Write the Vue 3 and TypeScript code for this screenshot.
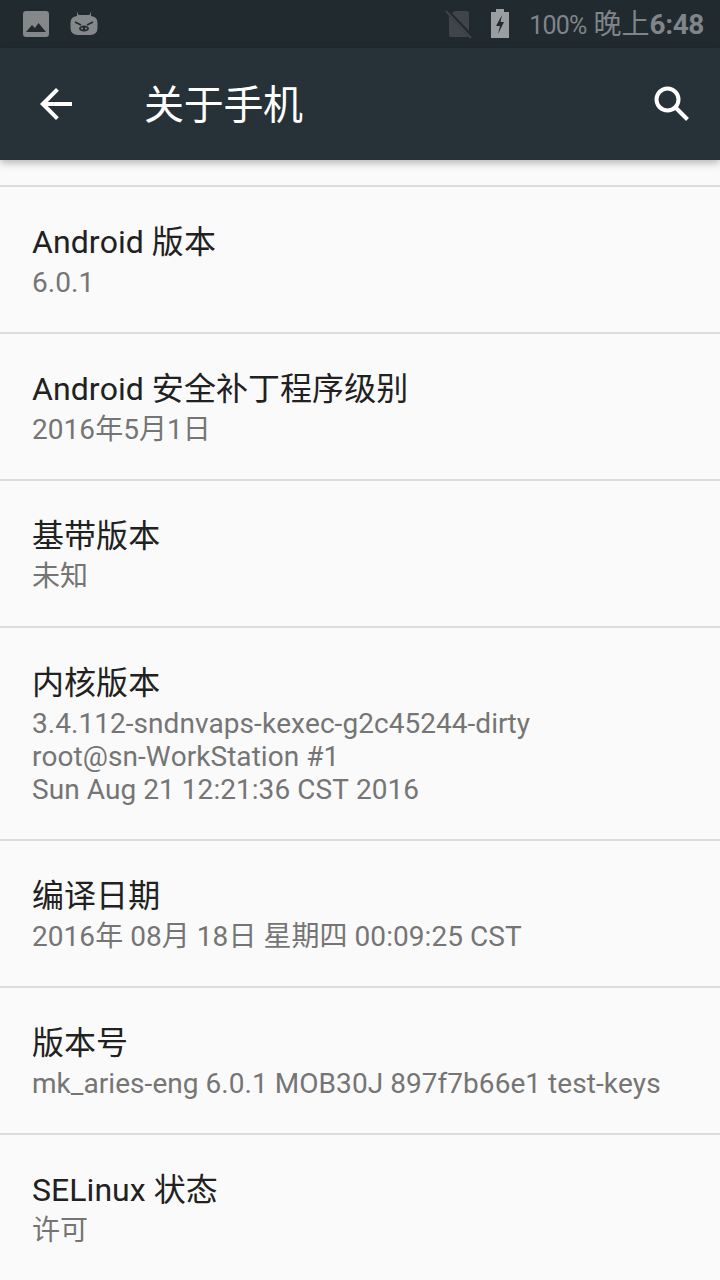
<script setup lang="ts">
interface Row {
  title: string
  lines: string[]
}

const rows: Row[] = [
  { title: 'Android 版本', lines: ['6.0.1'] },
  { title: 'Android 安全补丁程序级别', lines: ['2016年5月1日'] },
  { title: '基带版本', lines: ['未知'] },
  {
    title: '内核版本',
    lines: ['3.4.112-sndnvaps-kexec-g2c45244-dirty', 'root@sn-WorkStation #1', 'Sun Aug 21 12:21:36 CST 2016']
  },
  { title: '编译日期', lines: ['2016年 08月 18日 星期四 00:09:25 CST'] },
  { title: '版本号', lines: ['mk_aries-eng 6.0.1 MOB30J 897f7b66e1 test-keys'] },
  { title: 'SELinux 状态', lines: ['许可'] }
]
</script>

<template>
  <div class="screen">
    <div class="status">
      <svg class="pic" viewBox="0 0 26 26" width="26" height="26">
        <rect width="26" height="26" rx="3" fill="#84888b" />
        <path d="M3 21 L9 14 L12 17 L15.5 12 L23 21 Z" fill="#212a2f" />
      </svg>
      <svg class="pig" viewBox="0 0 28 26" width="28" height="26">
        <path d="M7 5 L7 0.5 L8.5 4 H19.5 L21 0.5 L21 5 Q27.5 5.5 27.5 12 V17 Q27.5 24 20 24 H8 Q0.5 24 0.5 17 V12 Q0.5 5.5 7 5 Z" fill="#84888b" />
        <path d="M5 11 L11 14 M23 11 L17 14" stroke="#212a2f" stroke-width="1.6" fill="none" />
        <ellipse cx="14" cy="17.5" rx="5" ry="3" fill="#212a2f" />
        <circle cx="12" cy="17.5" r="1" fill="#84888b" />
        <circle cx="16" cy="17.5" r="1" fill="#84888b" />
      </svg>
      <span class="grow"></span>
      <svg class="sim" viewBox="0 0 28 30" width="28" height="30">
        <path d="M10 2 H22 Q24 2 24 4 V22 L7 4 Z M4 7 L24 28 Q23 28 22 28 H6 Q4 28 4 26 Z" fill="#3f4549" />
        <path d="M1 2 L26 29" stroke="#3f4549" stroke-width="2" />
      </svg>
      <svg class="batt" viewBox="0 0 18 30" width="18" height="30">
        <path d="M5 0 H13 V3 H18 V29 H0 V3 H5 Z" fill="#9b9ea0" />
        <path d="M11 6 L5 17 H9 L7 25 L13 13 H9.5 Z" fill="#212a2f" />
      </svg>
      <span class="clock"><span class="pct">100%</span> 晚上<b>6:48</b></span>
    </div>

    <header class="toolbar">
      <svg class="back" viewBox="0 0 32 32" width="32" height="32">
        <path d="M32 14 H7.7 L18.9 2.8 L16 0 L0 16 L16 32 L18.8 29.2 L7.7 18 H32 Z" fill="#fff" />
      </svg>
      <h1>关于手机</h1>
      <svg class="search" viewBox="0 0 36 36" width="36" height="36">
        <circle cx="13.5" cy="13.5" r="11" fill="none" stroke="#fff" stroke-width="4" />
        <path d="M21.5 21.5 L33.5 33.5" stroke="#fff" stroke-width="4" fill="none" />
      </svg>
    </header>

    <main class="list">
      <section v-for="row in rows" :key="row.title" class="row">
        <div class="title">{{ row.title }}</div>
        <div v-for="line in row.lines" :key="line" class="summary">{{ line }}</div>
      </section>
    </main>
  </div>
</template>

<style>
html,
body {
  margin: 0;
  background: #fafafa;
}
</style>

<style scoped>
.screen {
  width: 720px;
  height: 1280px;
  overflow: hidden;
  background: #fafafa;
  font-family: Roboto, "Noto Sans CJK SC", sans-serif;
  font-kerning: none;
}

.status {
  height: 48px;
  box-sizing: border-box;
  padding: 0 16px 0 23px;
  display: flex;
  align-items: center;
  background: #212a2f;
}

.pig {
  margin-left: 21px;
}

.grow {
  flex: 1;
}

.batt {
  margin-left: 18px;
}

.clock {
  margin: 2px 0 0 20px;
  font-size: 28px;
  line-height: 48px;
  color: #7f8588;
  white-space: nowrap;
}

.pct {
  font-size: 25px;
  letter-spacing: -0.8px;
}

.clock b {
  font-weight: 700;
  letter-spacing: -0.4px;
}

.toolbar {
  position: relative;
  height: 112px;
  box-sizing: border-box;
  padding: 0 30px 0 40px;
  display: flex;
  align-items: center;
  background: #263238;
  box-shadow: 0 3px 8px rgba(0, 0, 0, 0.28);
}

.toolbar h1 {
  flex: 1;
  margin: 0 0 4px 72px;
  font-size: 40px;
  font-weight: 400;
  letter-spacing: -0.3px;
  color: #fff;
}

.list {
  padding-top: 25px;
}

.row {
  height: 147px;
  box-sizing: border-box;
  padding: 31px 32px 0;
  border-top: 2px solid #dcdcdc;
}

.title {
  font-size: 32px;
  line-height: 48px;
  letter-spacing: 0.05px;
  color: #212121;
}

.summary {
  font-size: 28px;
  line-height: 33px;
  letter-spacing: 0.05px;
  color: #757575;
}

.row:nth-child(4) {
  height: 213px;
}
</style>
